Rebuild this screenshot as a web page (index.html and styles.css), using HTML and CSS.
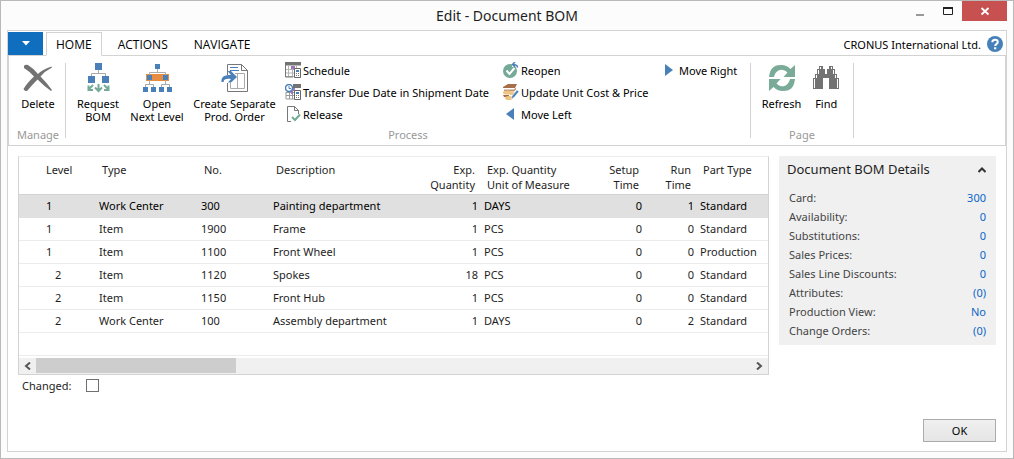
FILE: index.html
```html
<!DOCTYPE html>
<html lang="en">
<head>
<meta charset="utf-8">
<title>Edit - Document BOM</title>
<link rel="stylesheet" href="styles.css">
</head>
<body>
<div class="window">
  <header class="titlebar">
    <h1 class="title">Edit - Document BOM</h1>
    <div class="window-buttons">
      <button class="win-btn" type="button" aria-label="Minimize"><svg width="12" height="12"><path d="M2 10h8" stroke="#999" stroke-width="2"/></svg></button>
      <button class="win-btn" type="button" aria-label="Maximize"><svg width="12" height="12"><path d="M1.500 3.500h9v6h-9z" fill="none" stroke="#222"/><path d="M1 3h10" stroke="#222" stroke-width="2"/></svg></button>
      <button class="win-btn win-close" type="button" aria-label="Close"><svg width="12" height="12"><path d="M2.500 3l7 6.500M9.500 3l-7 6.500" stroke="#fff" stroke-width="1.800"/></svg></button>
    </div>
  </header>
  <div class="frame">
    <nav class="tabs">
      <button class="app-menu" type="button" aria-label="Application menu"><svg width="8" height="5"><path d="M0 0h8L4 4.500z" fill="#fff"/></svg></button>
      <button class="tab tab-active" type="button">HOME</button>
      <button class="tab tab-actions" type="button">ACTIONS</button>
      <button class="tab" type="button">NAVIGATE</button>
      <span class="company">CRONUS International Ltd.</span>
      <button class="help" type="button" aria-label="Help"><svg width="16" height="16"><circle cx="8" cy="8" r="8" fill="#4580b8"/><path d="M5.300 6.200C5.300 2.700 10.800 2.900 10.800 6C10.800 7.900 8.200 7.900 8.200 10" fill="none" stroke="#fff" stroke-width="2"/><path d="M7 11.300h2.300v2H7z" fill="#fff"/></svg></button>
    </nav>

    <div class="ribbon">
      <section class="group group-manage">
        <div class="group-items">
          <button class="big" type="button">
            <svg width="32" height="30"><path d="M2 3Q3 1 6 2Q11 5 16 11Q21 6 29.500 3.500L30 4.500Q23 8 18.500 13.500Q24 19 30 27L29 28Q22 23 15.500 16.500Q10 22 5.500 27.500Q3 29 1.500 26Q5 20 12 13.500Q7 8 2 5z" fill="#737373"/></svg>
            <span>Delete</span>
          </button>
        </div>
        <h2 class="group-name">Manage</h2>
      </section>

      <section class="group group-process">
        <div class="group-items">
          <button class="big big-request" type="button">
            <svg width="32" height="30"><path d="M16.500 7v3.500M9.500 13v-2.500h14V13" fill="none" stroke="#aaa"/><path d="M13 0h7v7h-7zM6 13h7v7H6zM20 13h7v7h-7z" fill="#4a80b9"/><path d="M16.500 21v7M13 24.500l3.500 3.500L20 24.500M11 22l-4 4M6.500 22.500v4.500H11M22 22l4 4M26.500 22.500v4.500H22" fill="none" stroke="#74aa96" stroke-width="2"/></svg>
            <span>Request<br>BOM</span>
          </button>
          <button class="big big-open" type="button">
            <svg width="32" height="30"><path d="M5 11h23v7H5z" fill="#e88c41"/><path d="M16.500 6v3M8.500 12V9.500h16V12M8.500 17v5M24.500 17v5M4.500 25v-3.500h8V25M20.500 25v-3.500h8V25" fill="none" stroke="#aaa"/><path d="M14 1h5v5h-5zM6 12h5v5H6zM22 12h5v5h-5zM2 24h5v5H2zM10 24h5v5h-5zM18 24h5v5h-5zM26 24h5v5h-5z" fill="#4a80b9"/></svg>
            <span>Open<br>Next Level</span>
          </button>
          <button class="big big-create" type="button">
            <svg width="32" height="30"><path d="M8.500 12V1.500h14l6 6v21h-20V20" fill="#fff" stroke="#777"/><path d="M22.500 1.500v6h6" fill="none" stroke="#777"/><path d="M16 10.500h9.500v15h-14v-6M18.500 10v15" fill="none" stroke="#aaa"/><path d="M11 4.500h8M11 7.500h9" stroke="#4a80b9"/><path d="M4.500 19H2.500C2 13 6 12 12 12L8.500 8H12l6 6-6 5.500H9L12 16C7 15.500 5 16 4.500 19z" fill="#4a80b9"/></svg>
            <span>Create Separate<br>Prod. Order</span>
          </button>
          <div class="small-list list-first">
            <button class="small" type="button">
              <svg width="16" height="16"><path d="M.5 1v13.500h9M3.500 4v10M7.500 4v10M1 7.500h9M1 11h9M11.500 4v3" fill="none" stroke="#b3b3b3"/><path d="M.5 1v14H8" fill="none" stroke="#777"/><path d="M0 0h16v3.500H0z" fill="#737373"/><path d="M6 4h4v3H6z" fill="#9c76bd"/><path d="M9.500 6.500h6v9h-6z" fill="#fff" stroke="#666"/><path d="M11 8h3v2h-3z" fill="#4a80b9"/><path d="M11 11.500h3M11 13.500h3" stroke="#777" stroke-dasharray="1 1"/></svg>
              <span>Schedule</span>
            </button>
            <button class="small" type="button">
              <svg width="16" height="16"><path d="M1 8v7h8M4.500 7v8M7.500 4v11M1 8.500h9M1 11.500h9" fill="none" stroke="#999"/><path d="M8 0h8v4H8z" fill="#737373"/><path d="M6 7h2v3H6zM8 4h2v3H8z" fill="#9c76bd"/><circle cx="4" cy="4" r="3.500" fill="#fff" stroke="#4a80b9" stroke-width="1.500"/><path d="M4 2v2.500h2" fill="none" stroke="#4a80b9"/><path d="M9.500 6.500h6v9h-6z" fill="#fff" stroke="#666"/><path d="M11 8h3v2h-3z" fill="#4a80b9"/><path d="M11 11.500h3M11 13.500h3" stroke="#777" stroke-dasharray="1 1"/></svg>
              <span>Transfer Due Date in Shipment Date</span>
            </button>
            <button class="small" type="button">
              <svg width="16" height="16"><path d="M6 15.500H2.500V.5h7l4 4V8" fill="none" stroke="#777"/><path d="M9.500.5v4h4" fill="none" stroke="#777"/><path d="M7 11l3 3 5-5.500" fill="none" stroke="#74aa96" stroke-width="2"/></svg>
              <span>Release</span>
            </button>
          </div>
          <div class="small-list list-second">
            <button class="small" type="button">
              <svg width="16" height="16"><circle cx="7" cy="9" r="7" fill="#74aa96"/><path d="M3.500 8.500l3 3.500 5-6" fill="none" stroke="#fff" stroke-width="2"/><path d="M9 0h7v5H9z" fill="#fff"/><path d="M14.500 5.500Q14.500 2.500 9.500 2.500M12 0L9.500 2.500 12 5" fill="none" stroke="#4a80b9" stroke-width="1.500"/></svg>
              <span>Reopen</span>
            </button>
            <button class="small" type="button">
              <svg width="16" height="16"><path d="M0 3L5 0h9l-2 4H0z" fill="#a76e4c"/><path d="M1 5.500h10l2-2v2l-2 2H1z" fill="#c09372"/><ellipse cx="4" cy="8.500" rx="4" ry="2" fill="#edc57f"/><path d="M0 11h6v2H1z" fill="#a76e4c"/><ellipse cx="9" cy="9.500" rx="3" ry="1.500" fill="#edc57f"/><ellipse cx="6" cy="14" rx="4" ry="2" fill="#edc57f"/><path d="M8 15l1-3 5-6 2 1.500-5 6z" fill="#4a80b9" stroke="#fff" stroke-width=".5"/></svg>
              <span>Update Unit Cost &amp; Price</span>
            </button>
            <button class="small" type="button">
              <svg width="16" height="16"><path d="M11 2v12L3 8z" fill="#4a80b9"/></svg>
              <span>Move Left</span>
            </button>
          </div>
          <div class="small-list">
            <button class="small" type="button">
              <svg width="16" height="16"><path d="M4 2v12l8-6z" fill="#4a80b9"/></svg>
              <span>Move Right</span>
            </button>
          </div>
        </div>
        <h2 class="group-name">Process</h2>
      </section>

      <section class="group group-page">
        <div class="group-items">
          <button class="big" type="button">
            <svg width="32" height="30"><path d="M3 14C4 5 8 2 15 2C19 2 22 3.500 24.500 6L29 2v12H17.500l4-4.500C16 4 9.500 7 8 14z" fill="#7aab99"/><path d="M29 16C28 25 24 28 17 28C13 28 10 26.500 7.500 24L3 28V16h11.500l-4 4.500C16 26 22.500 23 24 16z" fill="#7aab99"/></svg>
            <span>Refresh</span>
          </button>
          <button class="big" type="button">
            <svg width="32" height="30"><path d="M9 3h4v3h2v5h2V6h2V3h4v3h2v5h2v4h2v11H19V15h-6v11H3V15h2v-4h2V6h2z" fill="#737373"/><path d="M10.500 4v2M21.500 4v2M8.500 7v4M23.500 7v4M6.500 12v3M25.500 12v3M4.500 16v9M27.500 16v9" stroke="#fff"/><path d="M14 13h4v2h-4z" fill="#737373"/></svg>
            <span>Find</span>
          </button>
        </div>
        <h2 class="group-name">Page</h2>
      </section>
    </div>

    <main class="content">
      <div class="lines">
        <div class="grid-box">
          <table class="grid">
            <colgroup><col class="c-level"><col class="c-type"><col class="c-no"><col class="c-desc"><col class="c-qty"><col class="c-uom"><col class="c-setup"><col class="c-run"><col></colgroup>
            <thead>
              <tr><th class="lv">Level</th><th>Type</th><th>No.</th><th>Description</th><th class="num">Exp.<br>Quantity</th><th>Exp. Quantity<br>Unit of Measure</th><th class="num">Setup<br>Time</th><th class="num">Run<br>Time</th><th>Part Type</th></tr>
            </thead>
            <tbody>
              <tr class="selected"><td class="lv">1</td><td>Work Center</td><td>300</td><td>Painting department</td><td class="num">1</td><td>DAYS</td><td class="num">0</td><td class="num">1</td><td>Standard</td></tr>
              <tr><td class="lv">1</td><td>Item</td><td>1900</td><td>Frame</td><td class="num">1</td><td>PCS</td><td class="num">0</td><td class="num">0</td><td>Standard</td></tr>
              <tr><td class="lv">1</td><td>Item</td><td>1100</td><td>Front Wheel</td><td class="num">1</td><td>PCS</td><td class="num">0</td><td class="num">0</td><td>Production</td></tr>
              <tr><td class="lv sub">2</td><td>Item</td><td>1120</td><td>Spokes</td><td class="num">18</td><td>PCS</td><td class="num">0</td><td class="num">0</td><td>Standard</td></tr>
              <tr><td class="lv sub">2</td><td>Item</td><td>1150</td><td>Front Hub</td><td class="num">1</td><td>PCS</td><td class="num">0</td><td class="num">0</td><td>Standard</td></tr>
              <tr><td class="lv sub">2</td><td>Work Center</td><td>100</td><td>Assembly department</td><td class="num">1</td><td>DAYS</td><td class="num">0</td><td class="num">2</td><td>Standard</td></tr>
            </tbody>
          </table>
          <div class="blank-row"></div>
          <div class="scrollbar">
            <button class="scroll-btn" type="button" aria-label="Scroll left"><svg width="7" height="8"><path d="M6 .5L2 4l4 3.500" fill="none" stroke="#555" stroke-width="2"/></svg></button>
            <div class="track"><div class="thumb"></div></div>
            <button class="scroll-btn" type="button" aria-label="Scroll right"><svg width="7" height="8"><path d="M1 .5L5 4 1 7.500" fill="none" stroke="#555" stroke-width="2"/></svg></button>
          </div>
        </div>
        <div class="changed">
          <label for="changed">Changed:</label>
          <input class="check" type="checkbox" id="changed">
        </div>
      </div>

      <aside class="details">
        <div class="details-head">
          <h2 class="details-title">Document BOM Details</h2>
          <button class="collapse" type="button" aria-label="Collapse"><svg width="8" height="6"><path d="M.5 5L4 1.500 7.500 5" fill="none" stroke="#333" stroke-width="2"/></svg></button>
        </div>
        <dl class="facts">
          <div class="fact"><dt>Card:</dt><dd><a href="#">300</a></dd></div>
          <div class="fact"><dt>Availability:</dt><dd><a href="#">0</a></dd></div>
          <div class="fact"><dt>Substitutions:</dt><dd><a href="#">0</a></dd></div>
          <div class="fact"><dt>Sales Prices:</dt><dd><a href="#">0</a></dd></div>
          <div class="fact"><dt>Sales Line Discounts:</dt><dd><a href="#">0</a></dd></div>
          <div class="fact"><dt>Attributes:</dt><dd><a href="#">(0)</a></dd></div>
          <div class="fact"><dt>Production View:</dt><dd><a href="#">No</a></dd></div>
          <div class="fact"><dt>Change Orders:</dt><dd><a href="#">(0)</a></dd></div>
        </dl>
      </aside>
    </main>

    <footer class="footer"><button class="ok" type="button">OK</button></footer>
  </div>
</div>
</body>
</html>
```
FILE: styles.css
```css
* { box-sizing: border-box; }

body {
  margin: 0;
  font: 11px/15px "Noto Sans", "Open Sans", sans-serif;
  color: #1e1e1e;
}

h1, h2, dl, dd { margin: 0; font-weight: normal; }

button {
  margin: 0;
  padding: 0;
  border: 0;
  background: none;
  font: inherit;
  color: inherit;
}

svg { display: block; flex: none; }

.window {
  display: flex;
  flex-direction: column;
  min-height: 100vh;
  padding: 0 6px 6px;
  border: 1px solid #b9b9b9;
  background: #fcfcfc;
}

/* Title bar */
.titlebar {
  display: grid;
  grid-template-columns: 1fr auto 1fr;
  height: 29px;
}

.title {
  grid-column: 2;
  font-size: 14px;
  line-height: 29px;
}

.window-buttons {
  display: flex;
  justify-content: flex-end;
  height: 20px;
}

.win-btn {
  display: grid;
  place-items: center;
  width: 28px;
}

.win-close { width: 45px; background: #c75050; }

.frame {
  display: flex;
  flex: 1;
  flex-direction: column;
  border: 1px solid #d3d3d3;
  background: #fff;
}

/* Tabs */
.tabs {
  display: flex;
  align-items: flex-end;
  height: 25px;
  border-bottom: 1px solid #d3d3d3;
  color: #000;
}

.app-menu {
  display: grid;
  place-items: center;
  width: 35px;
  height: 23px;
  margin-right: 3px;
  background: #106ebe;
}

.tab {
  height: 22px;
  padding: 0 11px;
  font-size: 12px;
  font-family: "Open Sans", "Noto Sans", sans-serif;
}

.tab-active {
  height: 24px;
  margin-bottom: -1px;
  padding: 0 9px;
  border: 1px solid #d3d3d3;
  border-bottom-color: #fff;
  background: #fff;
}

.tab-actions { margin: 0 4px 0 5px; }

.company { margin-left: auto; line-height: 21px; }

.help { margin: 0 3px 3px 6px; }

/* Ribbon */
.ribbon {
  display: flex;
  padding: 7px 0;
  border: solid #d3d3d3;
  border-width: 0 1px 1px;
  color: #000;
}

.group {
  height: 75px;
  border-right: 1px solid #d3d3d3;
}

.group-manage { width: 57px; padding-left: 2px; }
.group-process { width: 685px; }
.group-page { width: 103px; }

.group-items { display: flex; justify-content: center; height: 66px; }
.group-process .group-items { justify-content: flex-start; }

.group-name {
  color: #999;
  font-size: 11px;
  line-height: 12px;
  text-align: center;
}

.big {
  display: flex;
  flex-direction: column;
  align-items: center;
  align-self: flex-start;
  gap: 4px;
  line-height: 13px;
  white-space: nowrap;
}

.big-request { width: 64px; }
.big-open { width: 54px; }
.big-create { width: 101px; }
.group-page .group-items { gap: 9px; }

.small-list { display: flex; flex-direction: column; }
.list-first { width: 218px; }
.list-second { width: 158px; }

.small {
  display: flex;
  align-items: center;
  gap: 2px;
  height: 22px;
  padding-bottom: 8px;
  white-space: nowrap;
}

/* Content */
.content {
  display: flex;
  align-items: flex-start;
  gap: 10px;
  padding: 10px 10px 0;
}

.lines { flex: 1; }

.grid-box { border: 1px solid #d3d3d3; border-top-color: #ececec; }

.grid {
  width: 100%;
  table-layout: fixed;
  border-collapse: separate;
  border-spacing: 0;
}

.c-level { width: 77px; }
.c-type { width: 102px; }
.c-no { width: 72px; }
.c-desc { width: 130px; }
.c-qty { width: 81px; }
.c-uom { width: 109px; }
.c-setup { width: 55px; }
.c-run { width: 52px; }

.grid th {
  height: 38px;
  padding: 5px 6px 0;
  border-bottom: 1px solid #d3d3d3;
  font-weight: normal;
  text-align: left;
  vertical-align: top;
}

.grid td {
  height: 23px;
  padding: 0 3px 1px;
  border-bottom: 1px solid #ececec;
  white-space: nowrap;
}

.grid .lv { padding-left: 27px; }
.grid .sub { padding-left: 36px; }
.grid .num { text-align: right; }
.grid .selected td { border-bottom-color: #e0e0e0; background: #e0e0e0; color: #000; }

.blank-row { height: 23px; border-bottom: 1px solid #ececec; }

.scrollbar {
  display: flex;
  height: 16px;
  margin: 2px 0 0;
  background: #f0f0f0;
}

.scroll-btn { display: grid; place-items: center; width: 17px; }
.track { flex: 1; }
.thumb { width: 28%; height: 15px; background: #cdcdcd; }

.changed {
  display: flex;
  align-items: center;
  gap: 15px;
  padding: 3px 4px;
}

.check {
  appearance: none;
  width: 13px;
  height: 13px;
  margin: 0;
  border: 1px solid #707070;
  background: #fff;
}

/* Details pane */
.details {
  width: 217px;
  padding: 3px 9px 5px 8px;
  background: #f0f0f0;
  color: #444;
}

.details-head { display: flex; justify-content: space-between; align-items: center; }
.details-title { color: #1e1e1e; font-size: 13px; line-height: 21px; }
.collapse { margin-right: 1px; }

.facts { padding: 8px 1px 0 2px; }
.fact { display: flex; justify-content: space-between; line-height: 19px; }
.fact a { color: #0b66c8; text-decoration: none; }

.footer {
  display: flex;
  justify-content: flex-end;
  margin-top: auto;
  padding: 0 10px 9px;
}

.ok {
  width: 73px;
  height: 23px;
  border: 1px solid #acacac;
  background: linear-gradient(#f0f0f0, #e5e5e5);
  color: #000;
}
```
